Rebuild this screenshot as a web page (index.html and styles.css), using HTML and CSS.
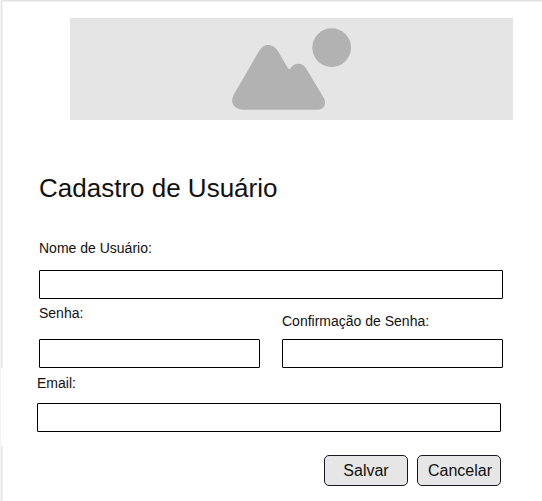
FILE: index.html
```html
<!DOCTYPE html>
<html lang="pt-BR">
<head>
<meta charset="utf-8">
<title>Cadastro de Usuário</title>
<link rel="stylesheet" href="styles.css">
</head>
<body>
<div class="page">
  <div class="edge"><span class="edge-line"></span><span class="edge-gap"></span><span class="edge-line"></span></div>
  <main class="content">
    <div class="banner">
      <svg class="banner-icon" viewBox="0 0 420 306" aria-hidden="true">
        <path d="M42 229L115 103C123 89 131 81 144 81C157 81 166 88 174 100L205 152Q208 157 212 150C218 141 225 137 235 137C245 137 252 141 258 151L311 239C320 256 314 275 294 275H71C42 275 28 254 42 229Z"/>
        <circle cx="335" cy="89" r="58"/>
      </svg>
    </div>
    <h1 class="title">Cadastro de Usuário</h1>
    <form class="form">
      <label class="field">Nome de Usuário:<input class="input" type="text"></label>
      <div class="passwords">
        <label class="field field-password">Senha:<input class="input" type="password"></label>
        <label class="field field-confirm">Confirmação de Senha:<input class="input" type="password"></label>
      </div>
      <div class="email-group">
        <label class="field field-email">Email:<input class="input" type="text"></label>
        <div class="actions">
          <button class="button" type="button">Salvar</button>
          <button class="button button-cancel" type="button">Cancelar</button>
        </div>
      </div>
    </form>
  </main>
</div>
</body>
</html>
```

FILE: styles.css
```css
* { box-sizing: border-box; }
body {
  margin: 0;
  background: #fff;
  color: #111;
  font-family: "Liberation Sans", Arial, sans-serif;
}
.page {
  display: flex;
  height: 501px;
  overflow: hidden;
  background: linear-gradient(#e1e1e1 0 1px, #f0f0f0 1px 2px, #fff 2px);
}
.edge {
  display: flex;
  flex-direction: column;
  width: 3px;
}
.edge-line {
  flex: 0 0 368px;
  background: linear-gradient(90deg, #f7f7f7 0 1px, #e3e3e3 1px 2px, #f3f3f3 2px);
}
.edge-gap {
  flex: 0 0 78px;
  background: linear-gradient(90deg, #f3f3f3 0 1px, #fff 1px);
}
.edge-gap + .edge-line { flex: 1; }
.content { width: 500px; padding: 18px 0 0 36px; }
.banner {
  width: 443px;
  height: 102px;
  margin-left: 31px;
  padding-left: 150px;
  background: #e5e5e5;
}
.banner-icon {
  display: block;
  width: 140px;
  height: 102px;
  fill: #b2b2b2;
}
.title {
  margin: 53px 0 37px;
  font-size: 26px;
  font-weight: 400;
  line-height: 30px;
}
.field {
  display: flex;
  flex-direction: column;
  gap: 14px;
  font-size: 14px;
  line-height: 16px;
}
.input {
  width: 100%;
  height: 29px;
  margin: 0;
  padding: 0 6px;
  border: 1px solid #000;
  border-radius: 1px;
  background: #fff;
  font: inherit;
}
.passwords {
  display: grid;
  grid-template-columns: 221px 221px;
  column-gap: 22px;
  padding-top: 6px;
}
.field-password { gap: 18px; }
.field-confirm { gap: 10px; padding-top: 8px; }
.email-group {
  width: 464px;
  margin: 7px 0 0 -2px;
}
.field-email { gap: 12px; }
.actions {
  display: flex;
  justify-content: flex-end;
  gap: 9px;
  margin-top: 23px;
}
.button {
  width: 84px;
  height: 31px;
  padding: 0;
  border: 1px solid #171728;
  border-radius: 5px;
  background: #e6e6e6;
  color: #111;
  font: 16px/29px "Liberation Sans", Arial, sans-serif;
}
.button-cancel { padding-left: 2px; }
```
